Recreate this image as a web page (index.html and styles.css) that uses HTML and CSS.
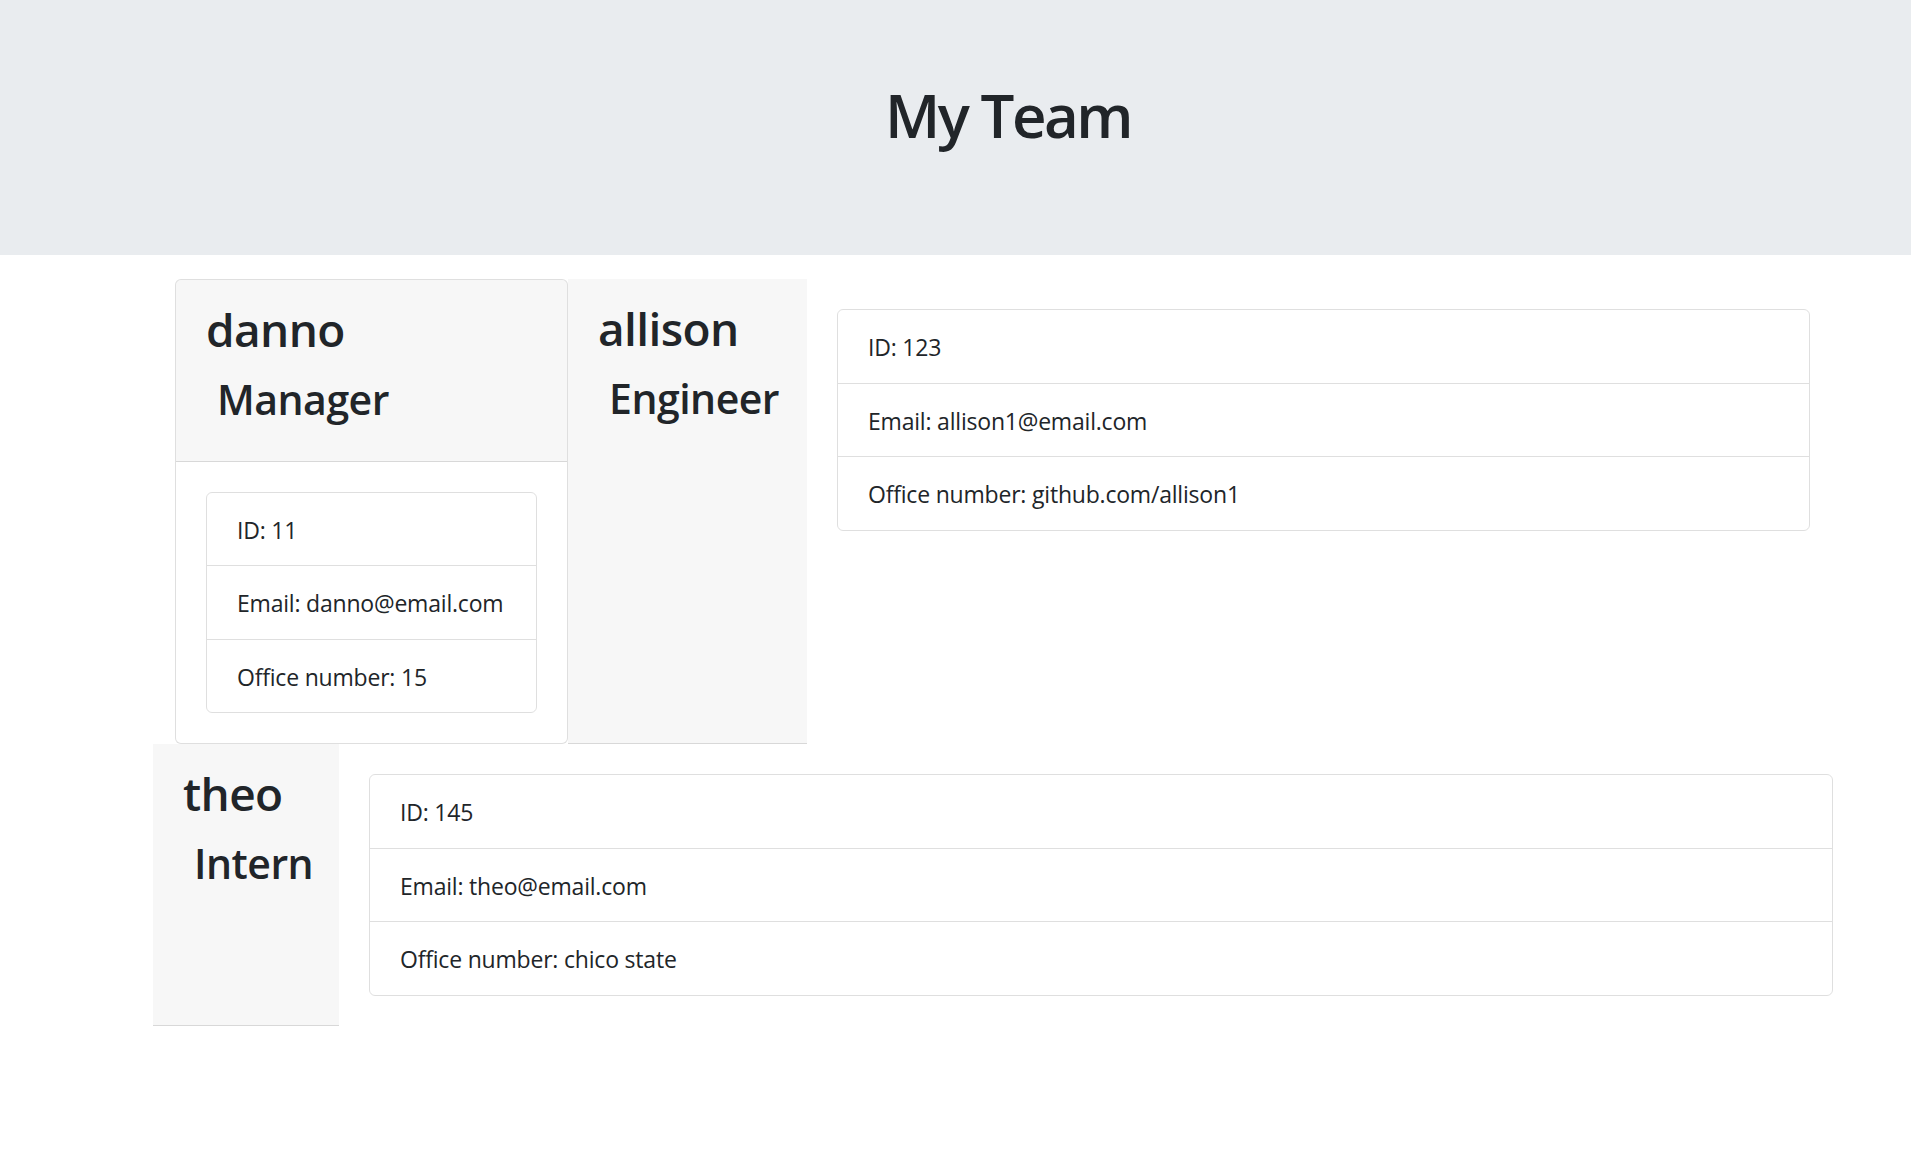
FILE: index.html
```html
<!DOCTYPE html>
<html lang="en">
<head>
<meta charset="utf-8">
<title>My Team</title>
<link rel="stylesheet" href="styles.css">
</head>
<body>
<header class="hero">
  <h1 class="hero-title">My Team</h1>
</header>
<main>
  <section class="row row-first">
    <div class="card">
      <div class="card-header">
        <h2 class="name">danno</h2>
        <h3 class="role">Manager</h3>
      </div>
      <div class="card-body">
        <ul class="list">
          <li class="item">ID: 11</li>
          <li class="item">Email: danno@email.com</li>
          <li class="item">Office number: 15</li>
        </ul>
      </div>
    </div>
    <div class="card-header eng-header">
      <h2 class="name">allison</h2>
      <h3 class="role">Engineer</h3>
    </div>
    <div class="card-body eng-body">
      <ul class="list">
        <li class="item">ID: 123</li>
        <li class="item">Email: allison1@email.com</li>
        <li class="item">Office number: github.com/allison1</li>
      </ul>
    </div>
  </section>
  <section class="row row-second">
    <div class="card-header int-header">
      <h2 class="name">theo</h2>
      <h3 class="role">Intern</h3>
    </div>
    <div class="card-body int-body">
      <ul class="list">
        <li class="item">ID: 145</li>
        <li class="item">Email: theo@email.com</li>
        <li class="item">Office number: chico state</li>
      </ul>
    </div>
  </section>
</main>
</body>
</html>
```

FILE: styles.css
```css
* {
  box-sizing: border-box;
}

body {
  margin: 0;
  font-family: "Open Sans", "Noto Sans", sans-serif;
  color: #212529;
  background: #fff;
}

.hero {
  background: #e9ecef;
  height: 255px;
  padding-top: 77px;
  padding-left: 105px;
  text-align: center;
  margin-bottom: 24px;
}

.hero-title {
  margin: 0;
  font-size: 60px;
  font-weight: 600;
  line-height: 76.8px;
  letter-spacing: -2.5px;
}

.row {
  display: flex;
  align-items: stretch;
}

.row-first {
  padding-left: 175px;
}

.row-second {
  padding-left: 153px;
}

.card {
  width: 393px;
  flex: none;
  border: 1px solid rgba(0, 0, 0, 0.125);
  border-radius: 6px;
  background: #fff;
  display: flex;
  flex-direction: column;
}

.card-header {
  background: rgba(0, 0, 0, 0.03);
  padding: 18px 30px;
  border-bottom: 1px solid rgba(0, 0, 0, 0.125);
}

.card > .card-header {
  border-radius: 5px 5px 0 0;
}

.card-body {
  padding: 30px;
}

.name {
  margin: 0 0 6.6px;
  font-size: 46px;
  font-weight: 600;
  line-height: 63px;
  letter-spacing: -0.6px;
}

.role {
  margin: 0 0 12px 11px;
  font-size: 41px;
  font-weight: 600;
  line-height: 63px;
  letter-spacing: -0.5px;
}

.list {
  margin: 0;
  padding: 0;
  list-style: none;
  border: 1px solid rgba(0, 0, 0, 0.125);
  border-radius: 6px;
}

.item {
  padding: 19px 30px 17.5px;
  font-size: 23px;
  line-height: 36px;
  letter-spacing: -0.2px;
  border-bottom: 1px solid rgba(0, 0, 0, 0.125);
}

.item:last-child {
  border-bottom: 0;
}

.eng-header {
  width: 239px;
  flex: none;
}

.eng-body {
  width: 1033px;
  flex: none;
}

.int-header {
  width: 186px;
  flex: none;
}

.int-body {
  width: 1524px;
  flex: none;
}
```
